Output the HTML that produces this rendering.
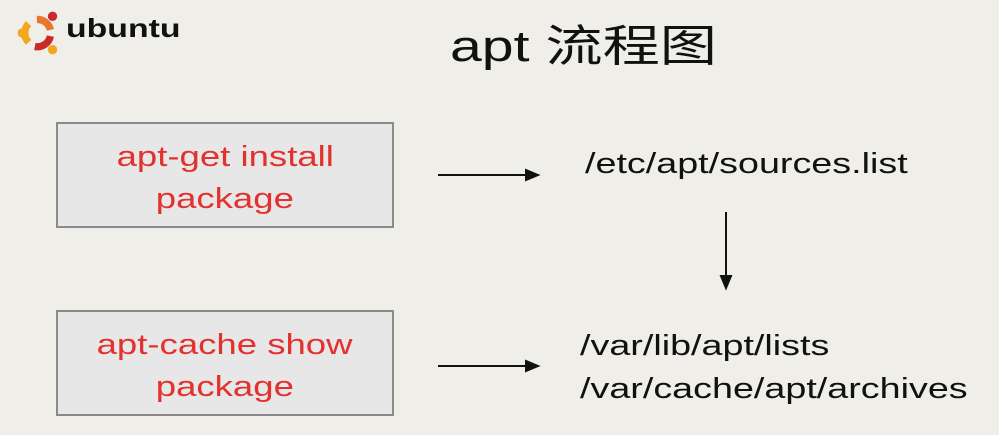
<!DOCTYPE html><html><head><meta charset="utf-8"><style>
body{margin:0;width:999px;height:435px;background:#efeee9;position:relative;overflow:hidden;font-family:"Liberation Sans","Noto Sans CJK SC",sans-serif}
.t{position:absolute;white-space:nowrap;transform-origin:0 0}
.box{position:absolute;left:56px;width:338px;height:106px;background:#e7e7e7;border:2px solid #8a8a8a;color:#e3312f;font-size:29px;text-align:center;line-height:42px;box-sizing:border-box;padding-top:12px}
.box span{display:inline-block;transform:scaleX(1.26)}
.d{font-size:29px;color:#111;transform:scaleX(1.3)}
</style></head><body>
<svg style="position:absolute;left:14px;top:10px" width="50" height="46" viewBox="0 0 48 44">
<path d="M22 9 A13 13 0 0 1 35 19" stroke="#e9762a" stroke-width="7" fill="none"/>
<path d="M35 25 A13 13 0 0 1 20 35" stroke="#c92a2a" stroke-width="7" fill="none"/>
<path d="M14 31 A13 13 0 0 1 14 13" stroke="#f2a81d" stroke-width="7" fill="none"/>
<circle cx="8" cy="22" r="4.5" fill="#f2a81d"/><circle cx="37" cy="6" r="4.5" fill="#c92a2a"/><circle cx="37" cy="38" r="4.5" fill="#f2a81d"/>
</svg>
<div class="t" style="left:66px;top:13px;font-size:26px;font-weight:bold;color:#111;transform:scaleX(1.3)">ubuntu</div>
<div class="t" style="left:450px;top:10px;font-size:44px;color:#111;transform:scaleX(1.3)">apt 流程图</div>
<div class="box" style="top:122px"><span>apt-get install</span><br><span>package</span></div>
<div class="box" style="top:310px"><span>apt-cache show</span><br><span>package</span></div>
<svg style="position:absolute;left:0;top:0" width="999" height="435">
<g stroke="#111" stroke-width="2" fill="#111">
<line x1="438" y1="175" x2="530" y2="175"/><path d="M538 175 L526 170 L526 180Z"/>
<line x1="438" y1="366" x2="530" y2="366"/><path d="M538 366 L526 361 L526 371Z"/>
<line x1="726" y1="212" x2="726" y2="280"/><path d="M726 288 L721 276 L731 276Z"/>
</g></svg>
<div class="t d" style="left:585px;top:148px">/etc/apt/sources.list</div>
<div class="t d" style="left:580px;top:330px">/var/lib/apt/lists</div>
<div class="t d" style="left:580px;top:373px">/var/cache/apt/archives</div>
</body></html>
